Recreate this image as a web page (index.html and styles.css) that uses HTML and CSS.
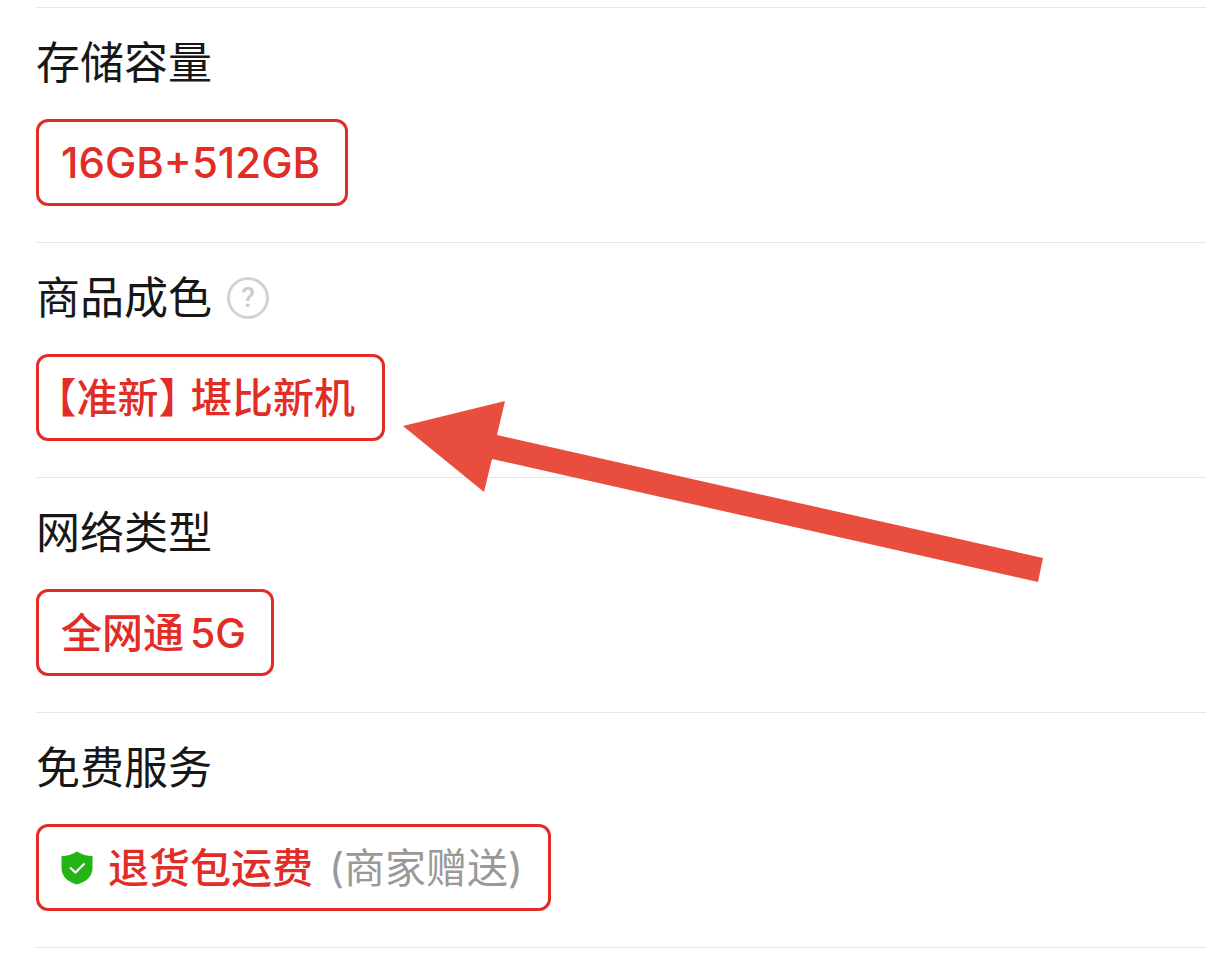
FILE: index.html
```html
<!DOCTYPE html>
<html lang="zh-CN">
<head>
<meta charset="utf-8">
<meta name="viewport" content="width=device-width, initial-scale=1">
<title>商品规格</title>
<link rel="stylesheet" href="styles.css">
</head>
<body>
<main class="specs">
  <section class="spec">
    <h2 class="spec-title">存储容量</h2>
    <button class="option option-latin" type="button">16GB+512GB</button>
  </section>
  <section class="spec">
    <h2 class="spec-title">商品成色
      <button class="help" type="button" aria-label="成色说明">?</button>
    </h2>
    <button class="option option-bracket" type="button"><span class="tag">【准新】</span><span>堪比新机</span></button>
  </section>
  <section class="spec">
    <h2 class="spec-title">网络类型</h2>
    <button class="option option-mixed" type="button"><span>全网通</span><span>5G</span></button>
  </section>
  <section class="spec">
    <h2 class="spec-title">免费服务</h2>
    <button class="option option-service" type="button">
      <svg class="shield" viewBox="0 0 32 34" aria-hidden="true"><path class="shield-body" d="M16 0.500C21 3.500 26 5 31.500 5V17C31.500 26 24 31.500 16 33.500C8 31.500 0.500 26 0.500 17V5C6 5 11 3.500 16 0.500Z"/><path class="shield-check" d="M9 16.500L14.500 21.500L23.500 12.500"/></svg>
      <span>退货包运费</span><span class="note">(商家赠送)</span>
    </button>
  </section>
  <svg class="arrow" viewBox="0 0 640 182" aria-hidden="true"><path d="M0 25L102 0L94 34L640 157L635 181L89 58L81 91Z"/></svg>
</main>
</body>
</html>
```
FILE: styles.css
```css
* {
  box-sizing: border-box;
}

body {
  margin: 0;
  background: #fff;
  color: #171717;
  font-family: Inter, "Noto Sans CJK SC", sans-serif;
}

.specs {
  position: relative;
  margin-top: 7px;
  padding-left: 36px;
}

.spec {
  padding: 24px 0 36px;
  border-top: 1px solid #e6e6e6;
}

.spec:last-of-type {
  border-bottom: 1px solid #e6e6e6;
}

.spec-title {
  display: flex;
  align-items: center;
  gap: 15px;
  margin: 0 0 25px;
  font-size: 44px;
  font-weight: 400;
  line-height: 62px;
}

.option {
  display: flex;
  align-items: center;
  width: fit-content;
  height: 87px;
  padding: 0 25px 0 22px;
  border: 3px solid #e12d26;
  border-radius: 12px;
  background: #fff;
  color: #e12d26;
  font-family: inherit;
  font-size: 41px;
  font-weight: 500;
  line-height: 60px;
  white-space: nowrap;
}

.option-latin {
  font-size: 42px;
}

.option-bracket {
  gap: 12px;
  padding: 0 27px 0 17px;
}

.tag {
  font-feature-settings: "halt";
}

.option-mixed {
  gap: 6px;
}

.help {
  width: 42px;
  height: 42px;
  padding: 0;
  border: 3px solid #d2d2d2;
  border-radius: 50%;
  background: none;
  color: #ccc;
  font-family: Roboto, sans-serif;
  font-size: 28px;
  font-weight: 500;
  line-height: 36px;
}

.shield {
  width: 32px;
  height: 34px;
  margin-right: 15px;
}

.shield-body {
  fill: #24b514;
}

.shield-check {
  fill: none;
  stroke: #fff;
  stroke-width: 2;
}

.note {
  margin-left: 16px;
  color: #999;
  font-weight: 400;
}

.arrow {
  position: absolute;
  left: 403px;
  top: 394px;
  width: 640px;
  height: 182px;
  fill: #e94d3d;
  pointer-events: none;
}
```
